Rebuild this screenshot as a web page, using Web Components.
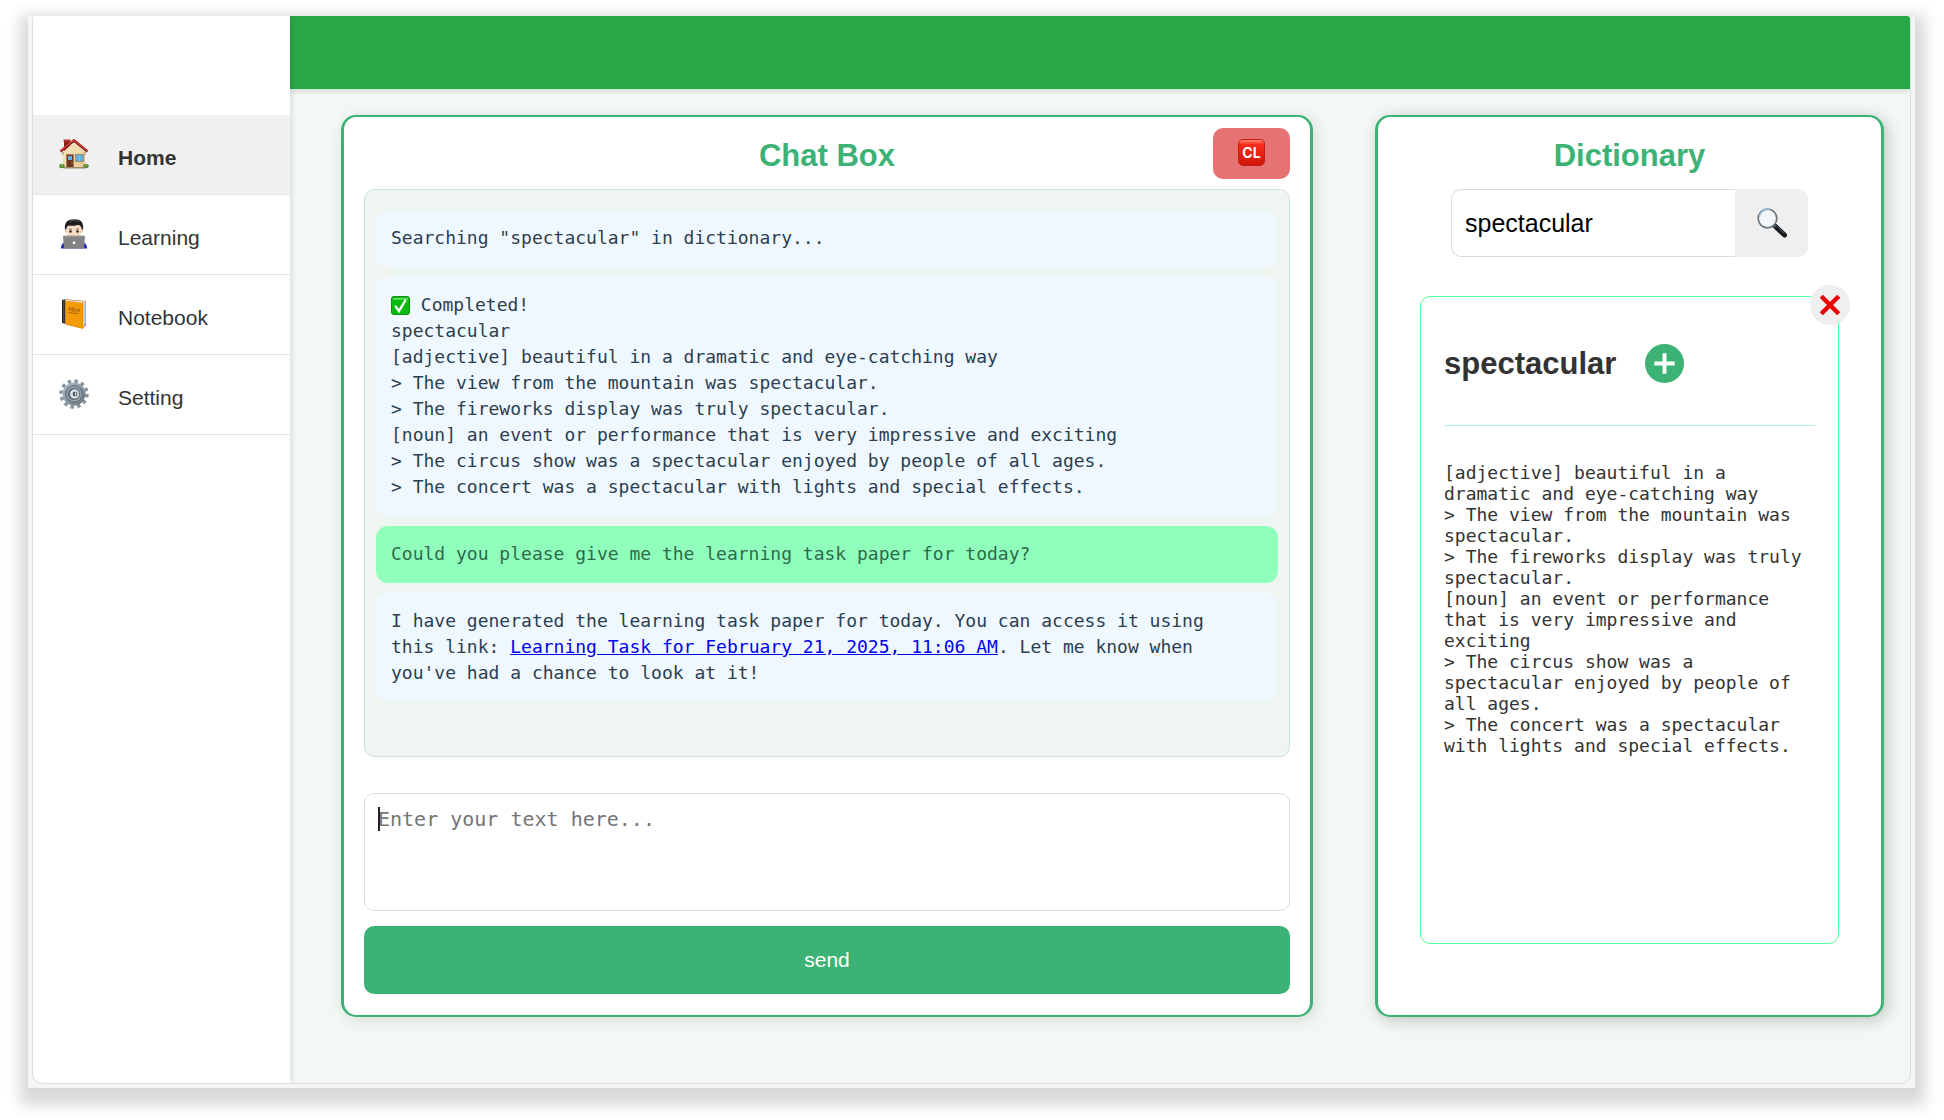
<!DOCTYPE html>
<html lang="en">
<head>
<meta charset="utf-8">
<title>Chat Box</title>
<style>
html,body{margin:0;background:#fff}
body{font-family:"Liberation Sans",Arial,sans-serif;color:#333;--green:#3cb375;--line:#d2e0db;--mono:"DejaVu Sans Mono","Liberation Mono",monospace}
</style>
</head>
<body>
<app-shell>
  <side-nav slot="side">
    <nav-item icon="home" active>Home</nav-item>
    <nav-item icon="learning">Learning</nav-item>
    <nav-item icon="notebook">Notebook</nav-item>
    <nav-item icon="setting">Setting</nav-item>
  </side-nav>
  <panel-card class="chat" heading="Chat Box">
    <clear-button slot="action"></clear-button>
    <message-list>
      <chat-message>Searching "spectacular" in dictionary...</chat-message>
      <chat-message><app-icon name="check" class="inline"></app-icon> Completed!<br>spectacular<br>[adjective] beautiful in a dramatic and eye-catching way<br>&gt; The view from the mountain was spectacular.<br>&gt; The fireworks display was truly spectacular.<br>[noun] an event or performance that is very impressive and exciting<br>&gt; The circus show was a spectacular enjoyed by people of all ages.<br>&gt; The concert was a spectacular with lights and special effects.</chat-message>
      <chat-message user>Could you please give me the learning task paper for today?</chat-message>
      <chat-message>I have generated the learning task paper for today. You can access it using this link: <a href="#task">Learning Task for February 21, 2025, 11:06 AM</a>. Let me know when you've had a chance to look at it!</chat-message>
    </message-list>
    <chat-form></chat-form>
  </panel-card>
  <panel-card class="dictionary" heading="Dictionary">
    <word-search></word-search>
    <word-card word="spectacular">[adjective] beautiful in a dramatic and eye-catching way<br>&gt; The view from the mountain was spectacular.<br>&gt; The fireworks display was truly spectacular.<br>[noun] an event or performance that is very impressive and exciting<br>&gt; The circus show was a spectacular enjoyed by people of all ages.<br>&gt; The concert was a spectacular with lights and special effects.</word-card>
  </panel-card>
</app-shell>
<script>
const ICONS = {
home:`<svg viewBox="0 0 30 30"><defs><linearGradient id="w" x1="0" y1="0" x2="1" y2="1"><stop offset="0" stop-color="#fbe9c4"/><stop offset="1" stop-color="#e3c793"/></linearGradient></defs>
<path d="M5 1h6v8l-6 4z" fill="#8e211b"/><path d="M4.600 .4h6.800v2H4.600z" fill="#b23a30"/>
<path d="M4 13 15 3l11 10v16H4z" fill="url(#w)"/>
<path d="M4 13v3M26 13v3" stroke="#9b8055"/>
<path d="M1.500 12.500 15 1.400l13.500 11.100" fill="none" stroke="#7d1d18" stroke-width="2.600"/><path d="M1.500 11.700 15 .8l13.500 10.900" fill="none" stroke="#d8463c" stroke-width="1.300"/>
<path d="M7 15h8v14H7z" fill="#a38059"/><path d="M8 16h6v13H8z" fill="#6f3522"/><path d="M9 17h4v4H9z" fill="#63b2e6"/><circle cx="13" cy="24" r=".6" fill="#e8c26a"/>
<path d="M16 15h9v8h-9z" fill="#a98b66"/><path d="M17 16h7v6h-7z" fill="#5dade4"/><path d="M17 19h7M20.500 16v6" stroke="#8cc9f0" stroke-width=".6"/>
<ellipse cx="3" cy="27" rx="2.700" ry="2.200" fill="#4f8a2b"/><ellipse cx="27" cy="27" rx="2.700" ry="2.200" fill="#4f8a2b"/><ellipse cx="3" cy="26.200" rx="1.500" ry="1" fill="#86b850"/><ellipse cx="27" cy="26.200" rx="1.500" ry="1" fill="#86b850"/>
<path d="M5 28h21v1.500H5z" fill="#9c866a"/></svg>`,
learning:`<svg viewBox="0 0 30 30"><path d="M2 29.500c0-4 2-6 5-6.500h16c3 .5 5 2.500 5 6.500z" fill="#1f27b8"/>
<ellipse cx="15" cy="11" rx="8" ry="9" fill="#f6dcc4"/><circle cx="7.300" cy="12" r="1.600" fill="#efcbb0"/><circle cx="22.700" cy="12" r="1.600" fill="#efcbb0"/>
<path d="M6 11C5 3 9 .3 15.500 .3S25 3.500 24 11l-1.300-1C22 6.500 20.500 6 18.500 6c-3 1-6 1-9 .6C8 7.500 7.400 9 7.300 10z" fill="#201c1f"/><path d="M10 3c3-2 7-2 10 0" fill="none" stroke="#5b555a" stroke-width="1"/>
<path d="M10 10.500c.8-.7 2-.7 2.800 0M17.200 10.500c.8-.7 2-.7 2.800 0" fill="none" stroke="#2a211d" stroke-width=".7"/><circle cx="11.500" cy="12.500" r="1.200" fill="#2b1a12"/><circle cx="18.500" cy="12.500" r="1.200" fill="#2b1a12"/>
<path d="M4 17.600q0-.9.900-.9h20.200q.9 0 .9.900L25 29.500H5z" fill="#838383"/><path d="M4 17.200h22" stroke="#a3a3a3" stroke-width=".8"/><circle cx="15" cy="23.800" r="1.400" fill="#fff"/></svg>`,
notebook:`<svg viewBox="0 0 30 30"><path d="M3 1 6.500 .3v24.500L3 24z" fill="#1b231e"/><path d="M6.500 .3 27 2v24l-3.500 3.700L6.500 25.500z" fill="#c86a05"/><path d="M24 3.500 26.600 2.600v22L24 28z" fill="#d7dbe0"/><path d="M25.300 3.500v22" stroke="#9aa0a8" stroke-width=".5"/>
<path d="M6.500 1.500 23.700 3.600v26L6.500 25z" fill="#f59a0b"/><path d="M6.500 .8 26.800 2.400 23.700 3.700 6.500 1.800z" fill="#e4e7ea"/><path d="M4.800 .8v23.600" stroke="#65706a" stroke-width=".8"/>
<path d="m9.500 8 1.200 3.500L12 8.400M13 9h1.800v3H13zM16 9v3.200h1.500M19 9.500l-.4 2.300h1.700M20 9.500v3.700M9.500 13.500l10 1.200" fill="none" stroke="#9c5a08" stroke-width=".8"/></svg>`,
setting:`<svg viewBox="0 0 30 30"><defs><linearGradient id="g" x1="0" y1="0" x2="1" y2="1"><stop offset="0" stop-color="#b5c1ca"/><stop offset="1" stop-color="#68747e"/></linearGradient></defs>
<circle cx="15" cy="15" r="12.700" fill="none" stroke="#87939d" stroke-width="4" stroke-dasharray="3.325 3.325"/><circle cx="15" cy="15" r="11.500" fill="url(#g)"/><circle cx="15" cy="15" r="9" fill="#65727d"/><circle cx="15" cy="15" r="7.700" fill="#94a1ab"/><circle cx="15" cy="15" r="6" fill="#56626d"/><circle cx="15.500" cy="15" r="4.700" fill="#d5dde3"/><circle cx="16" cy="15" r="2.300" fill="#3c454d"/><path d="M16.500 13.500v3" stroke="#fff" stroke-width="1.200"/></svg>`,
check:`<svg viewBox="0 0 20 20"><rect x=".5" y=".5" width="19" height="19" rx="2.500" fill="#0abb10" stroke="#078a0b"/><path d="M2 2h16v2H2z" fill="#5ddd60"/><path d="M4.500 10.500 8.300 16 15.500 4" fill="none" stroke="#fff" stroke-width="2.400"/></svg>`,
search:`<svg viewBox="0 0 30 30"><path d="m18.500 18.500 9 8.500" stroke="#161a1d" stroke-width="5" stroke-linecap="round"/><path d="m19.500 18 8 7.500" stroke="#566069" stroke-width="1"/><circle cx="10.500" cy="10.500" r="9.300" fill="#f2f6f8" stroke="#6d757c" stroke-width="1.700"/><path d="M2.300 8C4 2.800 9 .8 13 1.700" fill="none" stroke="#9fc0dc" stroke-width="1.700"/><path d="m16.800 16.800 2 2" stroke="#565e65" stroke-width="2"/></svg>`,
close:`<svg viewBox="0 0 40 40"><path d="m11.300 11.300 17.400 17.400M28.700 11.300 11.300 28.700" stroke="#ec0000" stroke-width="4.400"/></svg>`,
plus:`<svg viewBox="0 0 40 40"><path d="M20 9.500v21M9.500 20h21" stroke="#fff" stroke-width="4"/></svg>`
};
function define(name, css, html){
  customElements.define(name, class extends HTMLElement{
    constructor(){
      super();
      const markup = typeof html === 'function' ? html(this) : html;
      this.attachShadow({mode:'open'}).innerHTML = `<style>*{box-sizing:border-box}:host{box-sizing:border-box}${css}</style>${markup}`;
    }
  });
}
define('app-icon', `:host{display:block;width:30px;height:30px}:host(.inline){display:inline-block;width:19px;height:19px;vertical-align:-4px}svg{display:block;width:100%;height:100%}`,
  el => ICONS[el.getAttribute('name')]);

define('app-shell', `
:host{display:flex;min-height:calc(100vh - 48px);margin:16px 29px 32px 28px;padding:0 4px 4px;background:#f5f5f5;box-shadow:1px 8px 14px 9px #d8d8d8}
.app{flex:1;display:flex;border:1px solid #dedede;border-top:0;border-radius:4px 4px 10px 10px;overflow:hidden;background:#f3f8f5}
.page{flex:1;display:flex;flex-direction:column;min-width:0}
header{height:73px;background:#28a745;box-shadow:0 2px 6px rgba(0,0,0,.14)}
main{flex:1;display:grid;grid-template-columns:minmax(0,972fr) minmax(0,509fr);gap:62px;padding:26px 26px 66px 51px}
::slotted(.dictionary){--panel-shadow:3px 3px 16px rgba(0,0,0,.22)}`,
`<div class="app"><slot name="side"></slot><div class="page"><header></header><main><slot></slot></main></div></div>`);

define('side-nav', `:host{display:block;width:257px;flex:none;position:relative;background:#fff;box-shadow:0 0 8px rgba(0,0,0,.16);padding-top:99px}`, `<nav><slot></slot></nav>`);
define('nav-item', `
:host{display:block}
a{display:flex;align-items:center;gap:29px;height:80px;padding:0 26px;border-bottom:1px solid #e4e4e4;color:#333;text-decoration:none;font-size:21px;line-height:24px}
app-icon{margin-bottom:2px}
span{padding-top:6px}
:host([active]) a{background:#f0f0f0;font-weight:bold}`,
el => `<a href="#"><app-icon name="${el.getAttribute('icon')}"></app-icon><span><slot></slot></span></a>`);

define('panel-card', `
:host{display:flex;flex-direction:column;background:#fff;border:solid var(--green);border-width:2px 3px;border-radius:15px;padding:11px 20px 21px;box-shadow:var(--panel-shadow,3px 3px 16px rgba(0,0,0,.12))}
.head{display:grid;grid-template-columns:1fr auto 1fr;align-items:center;height:51px;margin-bottom:10px}
h2{grid-column:2;margin:4px 0 0;font-size:31px;line-height:36px;color:var(--green)}
.action{display:flex;justify-content:flex-end}`,
el => `<div class="head"><h2>${el.getAttribute('heading')}</h2><div class="action"><slot name="action"></slot></div></div><slot></slot>`);

define('clear-button', `
button{display:flex;align-items:center;justify-content:center;width:77px;height:51px;border:0;border-radius:10px;background:#e57373;padding:0 0 2px}
span{width:27px;height:27px;border-radius:5px;border:1px solid #c41c0e;background:linear-gradient(#ff8a78,#fb2c1a 18%,#ce1708);color:#fff;font:bold 14px/26px Inter,sans-serif;text-align:center}`,
`<button type="button" aria-label="Clear"><span>CL</span></button>`);

define('message-list', `:host{flex:1;display:flex;flex-direction:column;gap:10px;border:1px solid var(--line);border-radius:10px;background:#eff5f1;padding:20px 11px}`, `<slot></slot>`);
define('chat-message', `
:host{display:block;padding:15px 30px 16px 15px;border-radius:12px;background:#f0f8ff;color:#2c3e50;font-family:var(--mono);font-size:18px;line-height:26px}
:host([user]){background:#90ffbb;color:#2c6b4c}
::slotted(a){color:#00e}`, `<slot></slot>`);

define('chat-form', `
:host{display:block;margin-top:36px}
form{display:flex;flex-direction:column;gap:15px}
label{display:block;position:relative}
textarea{display:block;width:100%;height:118px;resize:none;border:1px solid var(--line);border-radius:10px;padding:13px;background:#fff;font-family:var(--mono);font-size:20px;line-height:24px}
textarea::placeholder{color:#757575}
.caret{position:absolute;left:14px;top:14px;width:2px;height:24px;background:#222}
button{height:68px;border:0;border-radius:10px;background:var(--green);color:#fff;font-family:inherit;font-size:21px}`,
`<form><label><textarea aria-label="Message" placeholder="Enter your text here..."></textarea><i class="caret"></i></label><button type="button">send</button></form>`);

define('word-search', `
:host{display:block;margin:0 53px}
form{display:flex;height:68px}
input{flex:1;min-width:0;border:1px solid var(--line);border-right:0;border-radius:10px 0 0 10px;padding:0 13px;font-family:inherit;font-size:25px;color:#000;background:#fff}
button{display:flex;align-items:center;justify-content:center;width:73px;border:0;border-radius:0 10px 10px 0;background:#efefef;padding:0}`,
`<form><input type="text" aria-label="Word" value="spectacular"><button type="button" aria-label="Search"><app-icon name="search"></app-icon></button></form>`);

define('word-card', `
:host{flex:1;display:block;position:relative;margin:39px 22px 50px;border:1px solid #57fb9f;border-radius:10px;padding:47px 23px 24px}
.word{display:flex;align-items:center;gap:29px;height:39px;margin-bottom:42px}
h3{margin:0;font-size:31px;line-height:36px}
button{width:39px;height:39px;padding:0;border:0;border-radius:50%;background:var(--green)}
button app-icon{width:100%;height:100%}
.close{position:absolute;top:-12px;right:-12px;width:40px;height:40px;background:#efefef}
hr{margin:0;border:0;border-top:1px solid #b0f5d6}
.text{margin-top:36px;font-family:var(--mono);font-size:18px;line-height:21px}`,
el => `<button class="close" type="button" aria-label="Close"><app-icon name="close"></app-icon></button><div class="word"><h3>${el.getAttribute('word')}</h3><button type="button" aria-label="Add"><app-icon name="plus"></app-icon></button></div><hr><div class="text"><slot></slot></div>`);
</script>
</body>
</html>
